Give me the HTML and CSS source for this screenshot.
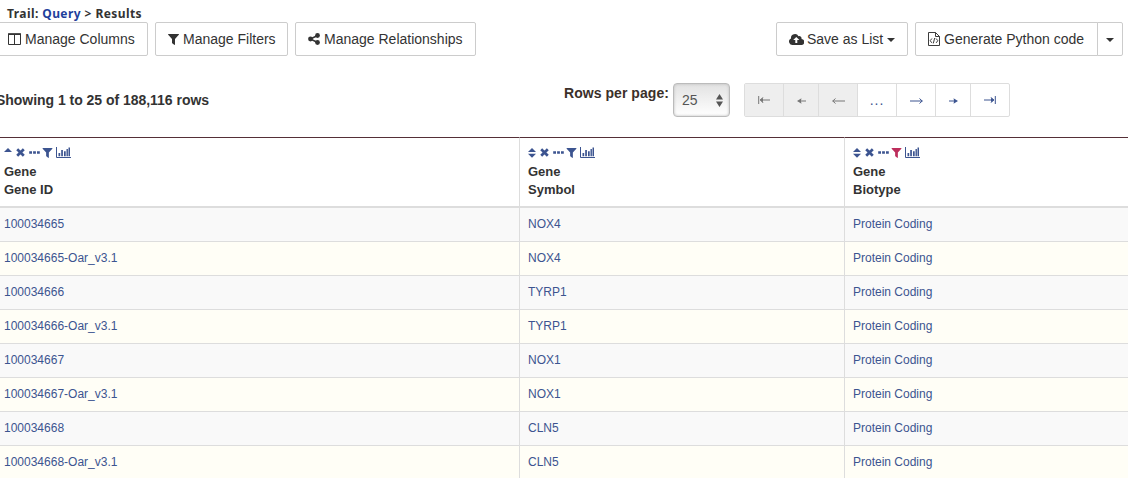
FILE: index.html
```
<!DOCTYPE html>
<html lang="en">
<head>
<meta charset="utf-8">
<title>Results</title>
<link rel="stylesheet" href="styles.css">
</head>
<body>
<svg class="defs" aria-hidden="true">
  <symbol id="columns" viewBox="0 0 13 12"><path d="M.5 1h12v10.500H.5zM6.500 1v10.500" fill="none" stroke="currentColor"/><path d="M0 .3h13v1.700H0z"/></symbol>
  <symbol id="filter" viewBox="0 0 11 11"><path d="M.4 0h10.200q.7.2.2.8L7 4.900v5.600q-.2.7-.8.300L4.200 9.200Q4 9 4 8.700V4.900L.2.800Q-.2.200.4 0z"/></symbol>
  <symbol id="share" viewBox="0 0 12 12"><path d="M9.500 2.500 2.500 6l7 3.500" fill="none" stroke="currentColor" stroke-width="1.500"/><circle cx="9.500" cy="2.500" r="2.400"/><circle cx="2.500" cy="6" r="2.400"/><circle cx="9.500" cy="9.500" r="2.400"/></symbol>
  <symbol id="cloud" viewBox="0 0 15 11"><path fill-rule="evenodd" d="M3.500 11A3.400 3.400 0 0 1 2 4.500 4 4 0 0 1 9.500 2.200 2.300 2.300 0 0 1 12.500 5 3 3 0 0 1 12 11zM7.300 3 4.200 6.100h2.100V9h2V6.100h2.100z"/></symbol>
  <symbol id="code" viewBox="0 0 12 14"><path d="M.5.500h7l4 4v9H.5zM7.500.500v4h4M3.900 6.500 2.200 8.700l1.700 2.200M8.100 6.500l1.700 2.200-1.700 2.200M6.700 6l-1.400 5.400" fill="none" stroke="currentColor" stroke-width=".95"/></symbol>
  <symbol id="sort" viewBox="0 0 8 10"><path d="M4 0l4 4H0zM0 5.700h8l-4 4z"/></symbol>
  <symbol id="updown" viewBox="0 0 7 13"><path d="M3.500 0 7 5.500H0zM0 7.500h7L3.500 13z"/></symbol>
  <symbol id="asc" viewBox="0 0 8 10"><path d="M4 0l4 4H0z"/></symbol>
  <symbol id="remove" viewBox="0 0 9 9"><path d="M1.200 1.200l6.600 6.600M7.800 1.200 1.200 7.800" stroke="currentColor" stroke-width="2.700"/></symbol>
  <symbol id="dots" viewBox="0 0 11 3"><path d="M.2.200h2.800v2.500H.2zM4.100.200h2.800v2.500H4.100zM8 .200h2.800v2.500H8z"/></symbol>
  <symbol id="chart" viewBox="0 0 15 11"><path d="M.5 0v10.500H15" fill="none" stroke="currentColor"/><path d="M2.500 6h1.700v3.300H2.500zM5.200 3h1.700v6.300H5.200zM8 4.200h1.700v5.100H8zM10.500 2h1.400v7.300h-1.400zM12.500.4H14v8.900h-1.500z"/></symbol>
  <symbol id="first" viewBox="0 0 12 8"><path d="M.7 0v8M2 4h10M5 1.300 2.300 4 5 6.700" fill="none" stroke="currentColor"/><path d="M2 4l3-2.200v4.400z"/></symbol>
  <symbol id="fast" viewBox="0 0 9 6"><path d="M0 3 4.500.300 4 2.500h5v1H4l.5 2.200z"/></symbol>
  <symbol id="arrow" viewBox="0 0 13 6"><path d="M.5 3H13M3.500.500.800 3l2.700 2.500" fill="none" stroke="currentColor"/></symbol>
</svg>
<div class="trail">Trail: <a>Query</a> &gt; Results</div>
<div class="toolbar">
  <div class="group">
    <button class="btn"><svg class="i-columns"><use href="#columns"/></svg>Manage Columns</button>
    <button class="btn filters"><svg class="i-filter"><use href="#filter"/></svg>Manage Filters</button>
    <button class="btn relations"><svg class="i-share"><use href="#share"/></svg>Manage Relationships</button>
  </div>
  <div class="group">
    <button class="btn save"><svg class="i-cloud"><use href="#cloud"/></svg>Save as List<span class="caret"></span></button>
    <div class="split">
      <button class="btn generate"><svg class="i-code"><use href="#code"/></svg>Generate Python code</button>
      <button class="btn toggle"><span class="caret"></span></button>
    </div>
  </div>
</div>
<div class="controls">
  <div class="summary">Showing 1 to 25 of 188,116 rows</div>
  <div class="label">Rows per page:</div>
  <div class="select">25<svg class="i-sort"><use href="#updown"/></svg></div>
  <div class="pager">
    <span class="page off"><svg class="i-first"><use href="#first"/></svg></span>
    <span class="page off narrow low"><svg class="i-fast"><use href="#fast"/></svg></span>
    <span class="page off low"><svg class="i-arrow"><use href="#arrow"/></svg></span>
    <span class="page more">...</span>
    <span class="page low"><svg class="i-arrow flip"><use href="#arrow"/></svg></span>
    <span class="page narrow low"><svg class="i-fast flip"><use href="#fast"/></svg></span>
    <span class="page"><svg class="i-first flip"><use href="#first"/></svg></span>
  </div>
</div>
<table class="results">
  <colgroup><col class="c1"><col class="c2"><col class="c3"></colgroup>
  <thead>
    <tr>
      <th><div class="tools"><svg class="t-sort"><use href="#asc"/></svg><svg class="t-remove"><use href="#remove"/></svg><svg class="t-dots"><use href="#dots"/></svg><svg class="t-filter"><use href="#filter"/></svg><svg class="t-chart"><use href="#chart"/></svg></div>Gene<br>Gene ID</th>
      <th><div class="tools"><svg class="t-sort"><use href="#sort"/></svg><svg class="t-remove"><use href="#remove"/></svg><svg class="t-dots"><use href="#dots"/></svg><svg class="t-filter"><use href="#filter"/></svg><svg class="t-chart"><use href="#chart"/></svg></div>Gene<br>Symbol</th>
      <th><div class="tools"><svg class="t-sort"><use href="#sort"/></svg><svg class="t-remove"><use href="#remove"/></svg><svg class="t-dots"><use href="#dots"/></svg><svg class="t-filter active"><use href="#filter"/></svg><svg class="t-chart"><use href="#chart"/></svg></div>Gene<br>Biotype</th>
    </tr>
  </thead>
  <tbody>
    <tr><td>100034665</td><td>NOX4</td><td>Protein Coding</td></tr>
    <tr><td>100034665-Oar_v3.1</td><td>NOX4</td><td>Protein Coding</td></tr>
    <tr><td>100034666</td><td>TYRP1</td><td>Protein Coding</td></tr>
    <tr><td>100034666-Oar_v3.1</td><td>TYRP1</td><td>Protein Coding</td></tr>
    <tr><td>100034667</td><td>NOX1</td><td>Protein Coding</td></tr>
    <tr><td>100034667-Oar_v3.1</td><td>NOX1</td><td>Protein Coding</td></tr>
    <tr><td>100034668</td><td>CLN5</td><td>Protein Coding</td></tr>
    <tr><td>100034668-Oar_v3.1</td><td>CLN5</td><td>Protein Coding</td></tr>
  </tbody>
</table>
</body>
</html>
```
FILE: styles.css
```
* { box-sizing: border-box; }
body { margin: 0; width: 1128px; height: 478px; overflow: hidden; background: #fff; color: #333; font: 14px/20px "Liberation Sans", Arial, sans-serif; }
svg { fill: currentColor; flex: none; }
.defs { display: none; }
.trail { height: 22px; padding: 4px 0 0 7px; font: bold 12px/19px "Noto Sans", sans-serif; letter-spacing: .42px; white-space: nowrap; }
.trail a { color: #1f3f9c; }
.toolbar { display: flex; justify-content: space-between; height: 34px; padding-right: 5px; margin-left: -5px; }
.group { display: flex; gap: 7px; }
.btn { display: flex; align-items: center; height: 34px; margin: 0; padding: 0 0 0 12px; border: 1px solid #ccc; border-radius: 2px; background: #fff; color: #333; font: 14px/20px "Liberation Sans", Arial, sans-serif; white-space: nowrap; width: 153px; }
.filters { width: 133px; }
.relations { width: 181px; }
.save { width: 132px; }
.split { display: flex; }
.generate { width: 183px; border-radius: 2px 0 0 2px; }
.toggle { width: 26px; margin-left: -1px; padding: 0 0 0 8px; border-radius: 0 2px 2px 0; }
.caret { border: 4px solid transparent; border-top-color: #333; border-bottom: 0; margin-top: 2px; }
.save .caret { margin-left: 4px; }
.i-columns { width: 13px; height: 12px; margin-right: 4px; }
.i-filter { width: 11px; height: 11px; margin-right: 4px; }
.i-share { width: 12px; height: 12px; margin-right: 4px; }
.i-cloud { width: 15px; height: 11px; margin-right: 3px; }
.i-code { width: 12px; height: 14px; margin-right: 4px; }
.controls { display: flex; align-items: flex-start; height: 81px; padding-top: 27px; }
.summary { width: 568px; margin-left: -4px; padding-top: 7px; font-weight: bold; letter-spacing: -.03px; }
.label { width: 109px; color: #3b302a; font-weight: bold; white-space: nowrap; letter-spacing: .05px; }
.select { display: flex; align-items: center; justify-content: space-between; width: 57px; height: 34px; padding: 0 6px 0 8px; border: 1px solid #bbb; border-radius: 4px; background: linear-gradient(#e2e2e2, #fff); box-shadow: inset 0 0 3px #bbb; color: #555; }
.i-sort { width: 7px; height: 13px; }
.pager { display: flex; height: 34px; margin-left: 14px; border: 1px solid #ddd; border-radius: 2px; color: #3c5490; }
.page { display: flex; align-items: center; justify-content: center; width: 39px; border-left: 1px solid #ddd; }
.page:first-child { width: 38px; border: 0; }
.narrow { width: 35px; }
.low { padding-top: 2px; }
.off { background: #eee; color: #777; }
.more { letter-spacing: 1px; }
.i-first { width: 12px; height: 8px; }
.i-fast { width: 9px; height: 6px; }
.i-arrow { width: 13px; height: 6px; }
.flip { transform: scaleX(-1); }
.results { width: 1128px; table-layout: fixed; border-spacing: 0; border-collapse: separate; }
.c1 { width: 519px; }
.c2 { width: 325px; }
.c3 { width: 284px; }
th { height: 71px; padding: 9px 4px 7px; border-top: 1px solid #552f37; border-bottom: 2px solid #ddd; text-align: left; vertical-align: top; font-size: 13px; line-height: 18px; }
th + th, td + td { border-left: 1px solid #ddd; padding-left: 8px; }
.tools { display: flex; align-items: center; height: 11px; margin-bottom: 5px; color: #3c5490; }
.t-sort { width: 8px; height: 10px; margin-right: 4px; }
.t-remove { width: 9px; height: 9px; margin-right: 4px; }
.t-dots { width: 11px; height: 3px; margin-right: 2px; }
.t-filter { width: 11px; height: 10px; margin-right: 3px; }
.t-chart { width: 15px; height: 11px; }
.active { color: #bd2e5c; }
td { height: 34px; padding: 0 4px 2px; border-bottom: 1px solid #ddd; color: #3c5490; font-size: 12px; line-height: 18px; }
tbody tr:nth-child(odd) { background: #f9f9f9; }
tbody tr:nth-child(even) { background: #fffef6; }
```
